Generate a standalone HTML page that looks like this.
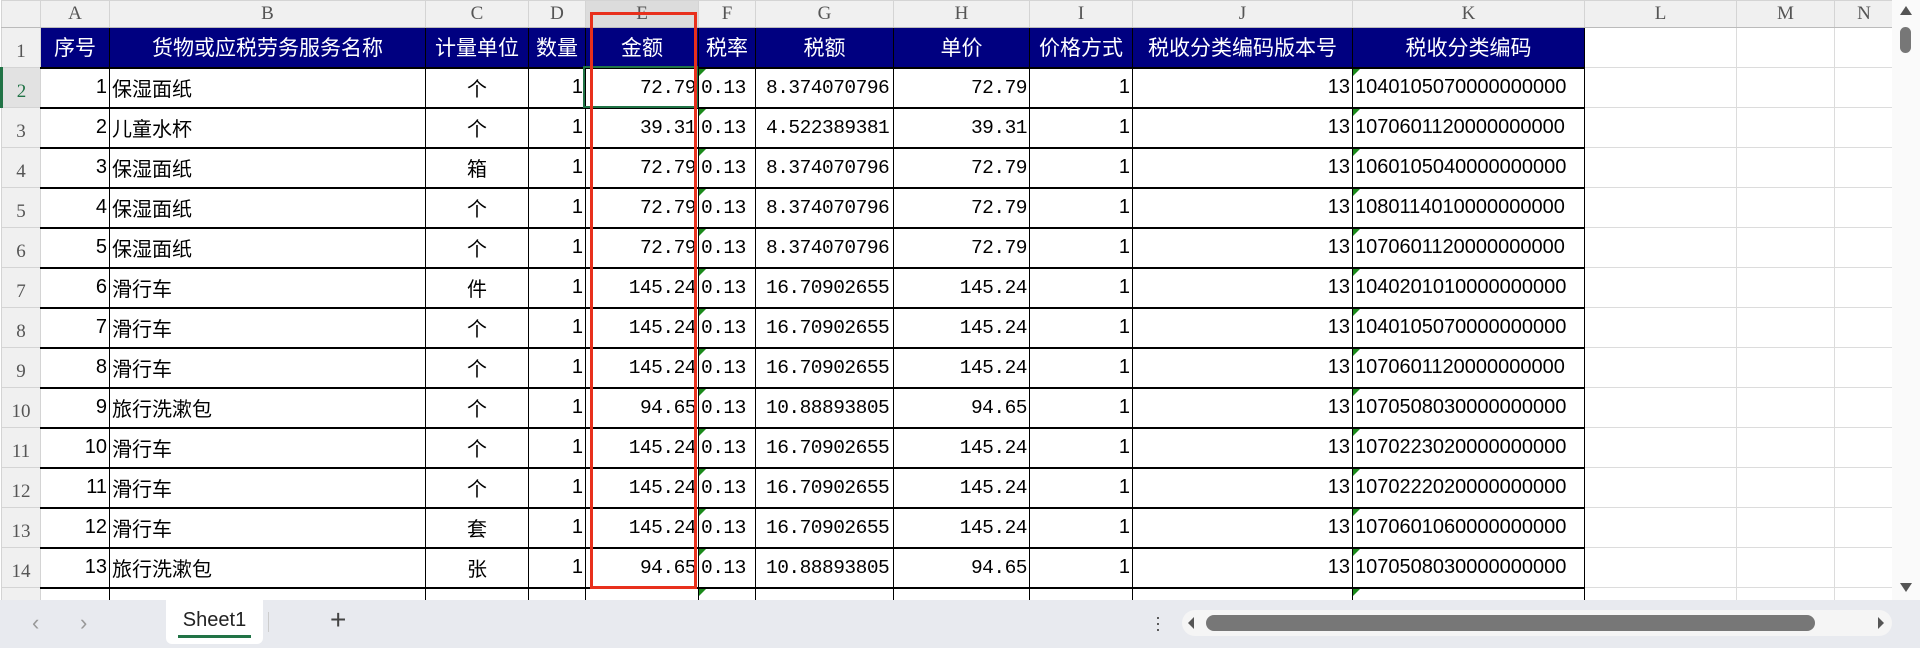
<!DOCTYPE html>
<html><head><meta charset="utf-8"><style>
*{margin:0;padding:0;box-sizing:border-box}
body{width:1920px;height:648px;overflow:hidden;background:#fff;position:relative;font-family:"Liberation Sans","Noto Sans CJK SC",sans-serif}
table{position:absolute;left:0;top:0;border-collapse:collapse;table-layout:fixed}
td{height:40px;border:1px solid #dcdcdc;font-size:20px;color:#000;white-space:nowrap;overflow:hidden;padding:0 2px;position:relative}
tr.ch td{height:27px;background:#f0f0f0;border-color:#d4d4d4;font-family:"Liberation Serif",serif;color:#555;text-align:center;font-size:19px;border-bottom:1px solid #bbb}
td.rh{background:#f0f0f0;border-color:#d4d4d4;font-family:"Liberation Serif",serif;color:#555;text-align:center;font-size:19px;vertical-align:bottom;padding-bottom:4px}
tr.h td.d{background:#000080;color:#fff;text-align:center;font-size:21px;border:1px solid #000}
td.d{border:1px solid #000;border-top:2px solid #000;border-bottom:2px solid #000}
.r{text-align:right}.c{text-align:center}.l{text-align:left}
.m{font-family:"Liberation Mono","Noto Sans CJK SC",monospace;font-size:19.5px;letter-spacing:-0.5px}
.g{padding-left:10px}
.t:before{content:"";position:absolute;left:0;top:0;border-top:7px solid #1a8a1a;border-right:7px solid transparent}
#red{position:absolute;left:590px;top:12px;width:107px;height:577px;border:3px solid #e8301c}
#sel{position:absolute;left:583px;top:66px;width:115px;height:42px;border:2px solid #217346}
#bar{position:absolute;left:0;top:600px;width:1920px;height:48px;background:#e8eaef}
#tab{position:absolute;left:166px;top:600px;width:97px;height:44px;background:#fff;border-radius:0 0 6px 6px;font-size:20px;color:#222;text-align:center;line-height:40px}
#tab i{position:absolute;left:12px;right:12px;top:35px;height:3px;background:#217346}
#vs{position:absolute;left:1892px;top:0;width:28px;height:600px;background:#fafafa}
</style></head><body>
<table>
<colgroup><col style="width:39px"><col style="width:69px"><col style="width:316px"><col style="width:103px"><col style="width:57px"><col style="width:113px"><col style="width:57px"><col style="width:138px"><col style="width:136px"><col style="width:103px"><col style="width:220px"><col style="width:232px"><col style="width:152px"><col style="width:98px"><col style="width:59px"></colgroup>
<tr class="ch"><td></td><td>A</td><td>B</td><td>C</td><td>D</td><td style="background:#dcdcdc">E</td><td>F</td><td>G</td><td>H</td><td>I</td><td>J</td><td>K</td><td>L</td><td>M</td><td>N</td></tr>
<tr class="h"><td class="rh">1</td><td class="d">序号</td><td class="d">货物或应税劳务服务名称</td><td class="d">计量单位</td><td class="d">数量</td><td class="d">金额</td><td class="d">税率</td><td class="d">税额</td><td class="d">单价</td><td class="d">价格方式</td><td class="d">税收分类编码版本号</td><td class="d">税收分类编码</td><td></td><td></td><td></td></tr>
<tr><td class="rh" style="color:#217346;background:#e2e2e2;border-left:3px solid #217346">2</td><td class="d r">1</td><td class="d l">保湿面纸</td><td class="d c">个</td><td class="d r">1</td><td class="d r m">72.79</td><td class="d l m t">0.13</td><td class="d l m g">8.374070796</td><td class="d r m">72.79</td><td class="d r">1</td><td class="d r">13</td><td class="d l t">1040105070000000000</td><td></td><td></td><td></td></tr>
<tr><td class="rh">3</td><td class="d r">2</td><td class="d l">儿童水杯</td><td class="d c">个</td><td class="d r">1</td><td class="d r m">39.31</td><td class="d l m t">0.13</td><td class="d l m g">4.522389381</td><td class="d r m">39.31</td><td class="d r">1</td><td class="d r">13</td><td class="d l t">1070601120000000000</td><td></td><td></td><td></td></tr>
<tr><td class="rh">4</td><td class="d r">3</td><td class="d l">保湿面纸</td><td class="d c">箱</td><td class="d r">1</td><td class="d r m">72.79</td><td class="d l m t">0.13</td><td class="d l m g">8.374070796</td><td class="d r m">72.79</td><td class="d r">1</td><td class="d r">13</td><td class="d l t">1060105040000000000</td><td></td><td></td><td></td></tr>
<tr><td class="rh">5</td><td class="d r">4</td><td class="d l">保湿面纸</td><td class="d c">个</td><td class="d r">1</td><td class="d r m">72.79</td><td class="d l m t">0.13</td><td class="d l m g">8.374070796</td><td class="d r m">72.79</td><td class="d r">1</td><td class="d r">13</td><td class="d l t">1080114010000000000</td><td></td><td></td><td></td></tr>
<tr><td class="rh">6</td><td class="d r">5</td><td class="d l">保湿面纸</td><td class="d c">个</td><td class="d r">1</td><td class="d r m">72.79</td><td class="d l m t">0.13</td><td class="d l m g">8.374070796</td><td class="d r m">72.79</td><td class="d r">1</td><td class="d r">13</td><td class="d l t">1070601120000000000</td><td></td><td></td><td></td></tr>
<tr><td class="rh">7</td><td class="d r">6</td><td class="d l">滑行车</td><td class="d c">件</td><td class="d r">1</td><td class="d r m">145.24</td><td class="d l m t">0.13</td><td class="d l m g">16.70902655</td><td class="d r m">145.24</td><td class="d r">1</td><td class="d r">13</td><td class="d l t">1040201010000000000</td><td></td><td></td><td></td></tr>
<tr><td class="rh">8</td><td class="d r">7</td><td class="d l">滑行车</td><td class="d c">个</td><td class="d r">1</td><td class="d r m">145.24</td><td class="d l m t">0.13</td><td class="d l m g">16.70902655</td><td class="d r m">145.24</td><td class="d r">1</td><td class="d r">13</td><td class="d l t">1040105070000000000</td><td></td><td></td><td></td></tr>
<tr><td class="rh">9</td><td class="d r">8</td><td class="d l">滑行车</td><td class="d c">个</td><td class="d r">1</td><td class="d r m">145.24</td><td class="d l m t">0.13</td><td class="d l m g">16.70902655</td><td class="d r m">145.24</td><td class="d r">1</td><td class="d r">13</td><td class="d l t">1070601120000000000</td><td></td><td></td><td></td></tr>
<tr><td class="rh">10</td><td class="d r">9</td><td class="d l">旅行洗漱包</td><td class="d c">个</td><td class="d r">1</td><td class="d r m">94.65</td><td class="d l m t">0.13</td><td class="d l m g">10.88893805</td><td class="d r m">94.65</td><td class="d r">1</td><td class="d r">13</td><td class="d l t">1070508030000000000</td><td></td><td></td><td></td></tr>
<tr><td class="rh">11</td><td class="d r">10</td><td class="d l">滑行车</td><td class="d c">个</td><td class="d r">1</td><td class="d r m">145.24</td><td class="d l m t">0.13</td><td class="d l m g">16.70902655</td><td class="d r m">145.24</td><td class="d r">1</td><td class="d r">13</td><td class="d l t">1070223020000000000</td><td></td><td></td><td></td></tr>
<tr><td class="rh">12</td><td class="d r">11</td><td class="d l">滑行车</td><td class="d c">个</td><td class="d r">1</td><td class="d r m">145.24</td><td class="d l m t">0.13</td><td class="d l m g">16.70902655</td><td class="d r m">145.24</td><td class="d r">1</td><td class="d r">13</td><td class="d l t">1070222020000000000</td><td></td><td></td><td></td></tr>
<tr><td class="rh">13</td><td class="d r">12</td><td class="d l">滑行车</td><td class="d c">套</td><td class="d r">1</td><td class="d r m">145.24</td><td class="d l m t">0.13</td><td class="d l m g">16.70902655</td><td class="d r m">145.24</td><td class="d r">1</td><td class="d r">13</td><td class="d l t">1070601060000000000</td><td></td><td></td><td></td></tr>
<tr><td class="rh">14</td><td class="d r">13</td><td class="d l">旅行洗漱包</td><td class="d c">张</td><td class="d r">1</td><td class="d r m">94.65</td><td class="d l m t">0.13</td><td class="d l m g">10.88893805</td><td class="d r m">94.65</td><td class="d r">1</td><td class="d r">13</td><td class="d l t">1070508030000000000</td><td></td><td></td><td></td></tr>
<tr><td class="rh"></td><td class="d"></td><td class="d"></td><td class="d"></td><td class="d"></td><td class="d"></td><td class="d t"></td><td class="d"></td><td class="d"></td><td class="d"></td><td class="d"></td><td class="d t"></td><td></td><td></td><td></td></tr>
</table>
<div id="sel"></div>
<div id="red"></div>
<div id="vs">
<div style="position:absolute;left:8px;top:6px;border-left:6px solid transparent;border-right:6px solid transparent;border-bottom:9px solid #555"></div>
<div style="position:absolute;left:8px;top:27px;width:11px;height:26px;border-radius:6px;background:#777"></div>
<div style="position:absolute;left:8px;top:583px;border-left:6px solid transparent;border-right:6px solid transparent;border-top:9px solid #555"></div>
</div>
<div id="bar">
<div style="position:absolute;left:32px;top:10px;font-size:22px;color:#999">&#x2039;</div>
<div style="position:absolute;left:80px;top:10px;font-size:22px;color:#999">&#x203A;</div>
<div style="position:absolute;left:268px;top:12px;width:1px;height:20px;background:#ccc"></div>
<div style="position:absolute;left:330px;top:4px;font-size:28px;color:#444">+</div>
<div style="position:absolute;left:1155px;top:14px;font-size:18px;color:#444;line-height:6px">·<br>·<br>·</div>
<div style="position:absolute;left:1182px;top:10px;width:710px;height:26px;border-radius:13px;background:#f5f5f5"></div>
<div style="position:absolute;left:1188px;top:17px;border-top:6px solid transparent;border-bottom:6px solid transparent;border-right:6px solid #555"></div>
<div style="position:absolute;left:1206px;top:15px;width:609px;height:16px;border-radius:8px;background:#777"></div>
<div style="position:absolute;left:1878px;top:17px;border-top:6px solid transparent;border-bottom:6px solid transparent;border-left:6px solid #555"></div>
</div>
<div id="tab">Sheet1<i></i></div>
</body></html>
